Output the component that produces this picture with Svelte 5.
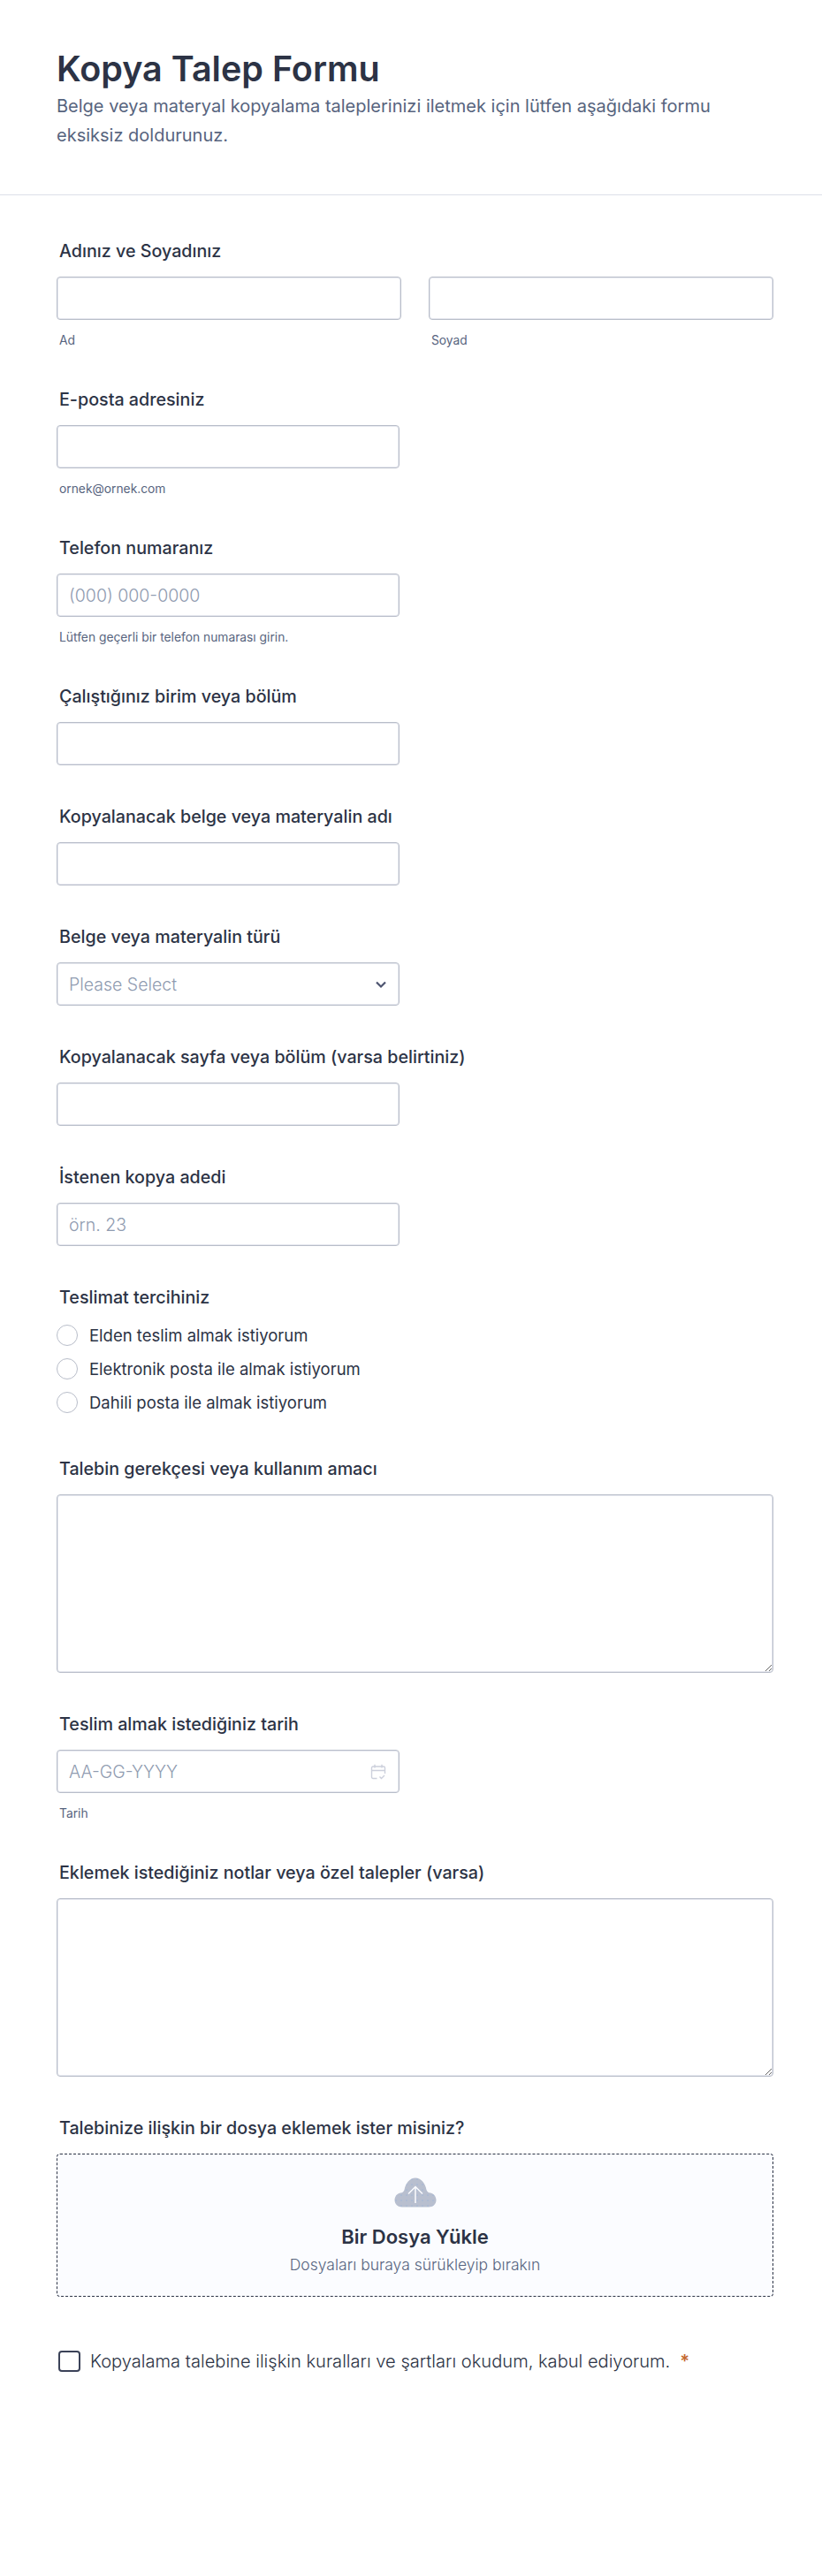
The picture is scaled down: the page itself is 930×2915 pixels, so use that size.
<script>
  const delivery = [
    'Elden teslim almak istiyorum',
    'Elektronik posta ile almak istiyorum',
    'Dahili posta ile almak istiyorum'
  ];
</script>

<main class="form">
  <header class="head">
    <h1>Kopya Talep Formu</h1>
    <p>Belge veya materyal kopyalama taleplerinizi iletmek için lütfen aşağıdaki formu eksiksiz doldurunuz.</p>
  </header>

  <div class="fields">
    <div class="field">
      <span class="label">Adınız ve Soyadınız</span>
      <div class="name-row">
        <div>
          <input type="text" />
          <span class="sub">Ad</span>
        </div>
        <div>
          <input type="text" />
          <span class="sub">Soyad</span>
        </div>
      </div>
    </div>

    <div class="field">
      <span class="label">E-posta adresiniz</span>
      <input class="short" type="email" />
      <span class="sub">ornek@ornek.com</span>
    </div>

    <div class="field">
      <span class="label">Telefon numaranız</span>
      <input class="short" type="tel" placeholder="(000) 000-0000" />
      <span class="sub">Lütfen geçerli bir telefon numarası girin.</span>
    </div>

    <div class="field">
      <span class="label">Çalıştığınız birim veya bölüm</span>
      <input class="short" type="text" />
    </div>

    <div class="field">
      <span class="label">Kopyalanacak belge veya materyalin adı</span>
      <input class="short" type="text" />
    </div>

    <div class="field">
      <span class="label">Belge veya materyalin türü</span>
      <div class="select short">
        <span>Please Select</span>
        <svg width="14" height="10" viewBox="0 0 14 10" fill="none">
          <path d="M2 2.500 7 7.500l5-5" stroke="#4c536f" stroke-width="2.200" />
        </svg>
      </div>
    </div>

    <div class="field">
      <span class="label">Kopyalanacak sayfa veya bölüm (varsa belirtiniz)</span>
      <input class="short" type="text" />
    </div>

    <div class="field">
      <span class="label">İstenen kopya adedi</span>
      <input class="short" type="text" placeholder="örn. 23" />
    </div>

    <div class="field">
      <span class="label radio-label">Teslimat tercihiniz</span>
      <div class="radios">
        {#each delivery as option}
          <label class="radio">
            <span class="circle"></span>
            {option}
          </label>
        {/each}
      </div>
    </div>

    <div class="field">
      <span class="label">Talebin gerekçesi veya kullanım amacı</span>
      <textarea></textarea>
    </div>

    <div class="field">
      <span class="label">Teslim almak istediğiniz tarih</span>
      <div class="date short">
        <span>AA-GG-YYYY</span>
        <svg width="18" height="18" viewBox="0 0 18 18" fill="none" stroke="#ccd0dc" stroke-width="1.400">
          <path d="M7.500 16.500H3a1.500 1.500 0 0 1-1.500-1.500V4.500A1.500 1.500 0 0 1 3 3h12a1.500 1.500 0 0 1 1.500 1.500V11M1.500 7.500h15M5 .8v3.700M13 .8v3.700M10.500 14.500l2 2 3.500-3.500" />
        </svg>
      </div>
      <span class="sub">Tarih</span>
    </div>

    <div class="field">
      <span class="label">Eklemek istediğiniz notlar veya özel talepler (varsa)</span>
      <textarea></textarea>
    </div>

    <div class="field">
      <span class="label">Talebinize ilişkin bir dosya eklemek ister misiniz?</span>
      <div class="upload">
        <svg width="48" height="34" viewBox="0 0 48 34">
          <defs>
            <pattern id="dots" width="6" height="6" patternUnits="userSpaceOnUse">
              <circle cx="2" cy="2" r="0.500" fill="#7fa6dc" />
            </pattern>
          </defs>
          <path d="M9 33.500C4 33.500.5 30 .5 25.500.5 21 4 17.500 8.500 17.200 10 16.800 11 15.500 11.500 14 13 6 18 .5 24 .5s11 5.500 12.500 13.500c.5 1.500 1.500 2.800 3 3.200 4.500.3 8 3.800 8 8.300 0 4.500-3.500 8-8.500 8Z" fill="#b8bfcf" />
          <path d="M9 33.500C4 33.500.5 30 .5 25.500.5 21 4 17.500 8.500 17.200 10 16.800 11 15.500 11.500 14 13 6 18 .5 24 .5s11 5.500 12.500 13.500c.5 1.500 1.500 2.800 3 3.200 4.500.3 8 3.800 8 8.300 0 4.500-3.500 8-8.500 8Z" fill="url(#dots)" />
          <path d="M24 29V11M16 18.500 24 10.500l8 8" fill="none" stroke="#fbfcff" stroke-width="1.500" />
        </svg>
        <strong>Bir Dosya Yükle</strong>
        <span>Dosyaları buraya sürükleyip bırakın</span>
      </div>
    </div>

    <label class="terms">
      <span class="box"></span>
      <span class="terms-text">Kopyalama talebine ilişkin kuralları ve şartları okudum, kabul ediyorum.</span>
      <span class="req">*</span>
    </label>
  </div>
</main>

<style>
  :global(body) {
    margin: 0;
    background: #fff;
  }

  .form {
    width: 930px;
    height: 2915px;
    box-sizing: border-box;
    font-family: Inter, sans-serif;
    color: #2c3345;
  }

  .head {
    padding: 52px 64px 50px;
    border-bottom: 1px solid #dcdfe8;
  }

  h1 {
    margin: 0;
    font-size: 39.5px;
    line-height: 52px;
    font-weight: 600;
  }

  .head p {
    margin: 0;
    font-size: 20px;
    line-height: 33px;
    color: #57647e;
  }

  .fields {
    padding: 49px 54px 0 64px;
    display: flex;
    flex-direction: column;
    gap: 44px;
  }

  .field {
    display: flex;
    flex-direction: column;
    align-items: flex-start;
  }

  .label {
    margin: 0 0 14px 3px;
    font-size: 19.7px;
    line-height: 29px;
    font-weight: 500;
  }

  .name-row {
    display: grid;
    grid-template-columns: 390px 390px;
    gap: 31px;
  }

  input,
  textarea,
  .select,
  .date {
    display: block;
    box-sizing: border-box;
    width: 390px;
    height: 49px;
    margin: 0;
    padding: 0 13px;
    background: #fff;
    border: 1px solid #b8bdc9;
    border-radius: 4px;
    font-family: inherit;
    font-size: 19.5px;
    font-weight: 300;
    color: #2c3345;
    box-shadow: 0 0 0 1px #e6e8ef inset;
  }

  input.short,
  .select,
  .date {
    width: 388px;
  }

  input::placeholder,
  .select > span,
  .date > span {
    color: #8f9bb0;
    opacity: 1;
  }

  .select,
  .date {
    display: flex;
    align-items: center;
    justify-content: space-between;
  }

  .date svg {
    margin-right: 1px;
  }

  textarea {
    width: 811px;
    height: 202px;
  }

  .sub {
    display: block;
    margin: 14px 0 0 3px;
    font-size: 13.8px;
    line-height: 18px;
    color: #57647e;
  }

  .radio-label {
    margin-bottom: 14.5px;
  }

  .radios {
    display: flex;
    flex-direction: column;
    gap: 12px;
    margin-bottom: 4.500px;
  }

  .radio {
    display: flex;
    align-items: center;
    gap: 13px;
    font-size: 18.5px;
    line-height: 26px;
  }

  .circle {
    box-sizing: border-box;
    width: 24px;
    height: 24px;
    border: 1px solid #b8bdc9;
    border-radius: 50%;
  }

  .upload {
    box-sizing: border-box;
    width: 811px;
    height: 162px;
    padding-top: 26px;
    display: flex;
    flex-direction: column;
    align-items: center;
    background: #fbfcff;
    border: 1px dashed #2c3345;
    border-radius: 4px;
  }

  .upload strong {
    margin-top: 18px;
    font-size: 22px;
    line-height: 30px;
    font-weight: 600;
  }

  .upload > span {
    margin-top: 5px;
    font-size: 17.5px;
    line-height: 24px;
    font-weight: 300;
    color: #57647e;
  }

  .terms {
    margin-top: 17px;
    display: flex;
    align-items: center;
    gap: 11px;
    padding-left: 2px;
    font-size: 20.1px;
    font-weight: 300;
  }

  .box {
    box-sizing: border-box;
    width: 25px;
    height: 24px;
    border: 2px solid #3b4258;
    border-radius: 4px;
  }

  .req {
    color: #c4682f;
    align-self: flex-start;
    font-weight: 600;
  }
</style>
